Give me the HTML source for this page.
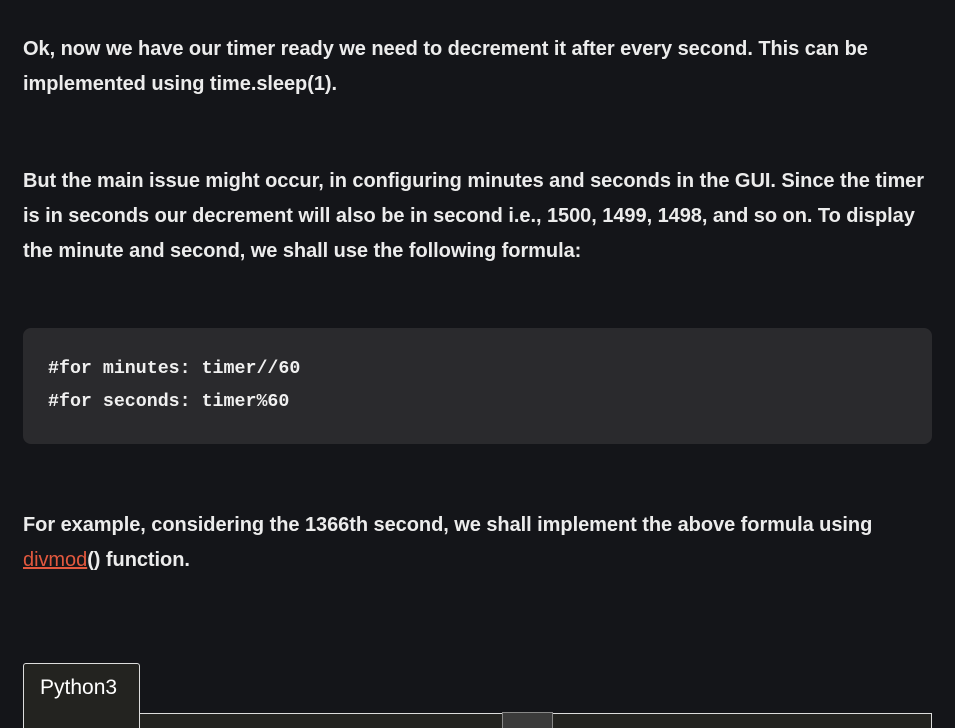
<!DOCTYPE html>
<html><head><style>
html,body{margin:0;background:#141519;width:955px;height:728px;overflow:hidden;}
body{position:relative;font-family:"Liberation Sans",sans-serif;color:#ececec;}
p{position:absolute;left:23px;margin:0;font-size:20px;line-height:35px;font-weight:600;white-space:nowrap;letter-spacing:-0.05px}
a{color:#e2583e;text-decoration:underline;font-weight:normal}
.code{position:absolute;left:23px;top:328px;width:909px;height:116px;background:#2a2a2d;border-radius:8px}
.code div{position:absolute;left:25px;font-family:"Liberation Mono",monospace;font-weight:bold;font-size:18.3px;color:#f0f0f0}
</style></head><body>
<p style="top:32px">Ok, now we have our timer ready we need to decrement it after every second. This can be<br>implemented using time.sleep(1).</p>
<p style="top:164px">But the main issue might occur, in configuring minutes and seconds in the GUI. Since the timer<br>is in seconds our decrement will also be in second i.e., 1500, 1499, 1498, and so on. To display<br>the minute and second, we shall use the following formula:</p>
<div class="code"><div style="top:31px">#for minutes: timer//60</div><div style="top:64px">#for seconds: timer%60</div></div>
<p style="top:508px">For example, considering the 1366th second, we shall implement the above formula using<br><a>divmod</a>() function.</p>
<div style="position:absolute;left:139px;top:713px;width:792px;height:20px;border-top:1px solid #ddd;border-right:1px solid #ddd;background:#232320"></div>
<div style="position:absolute;left:23px;top:663px;width:115px;height:70px;border:1px solid #ddd;border-bottom:none;border-radius:3px 3px 0 0;background:#232320"></div>
<div style="position:absolute;left:40px;top:676px;font-size:21px;color:#fff">Python3</div>
<div style="position:absolute;left:502px;top:712px;width:49px;height:20px;background:#3b3b3b;border:1px solid #888;border-bottom:none"></div>
</body></html>
